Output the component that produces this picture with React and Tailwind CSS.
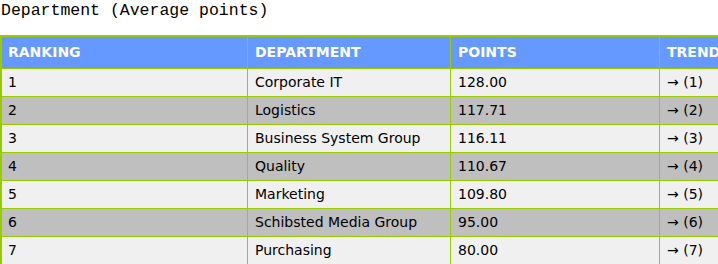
const rows = [
  { rank: 1, dept: 'Corporate IT', points: '128.00' },
  { rank: 2, dept: 'Logistics', points: '117.71' },
  { rank: 3, dept: 'Business System Group', points: '116.11' },
  { rank: 4, dept: 'Quality', points: '110.67' },
  { rank: 5, dept: 'Marketing', points: '109.80' },
  { rank: 6, dept: 'Schibsted Media Group', points: '95.00' },
  { rank: 7, dept: 'Purchasing', points: '80.00' },
];

const cell = 'border-r border-b border-[#99cc00] px-[7px] p-0';

export default function App() {
  return (
    <div className="w-[718px] h-[264px] overflow-hidden bg-white">
      <div className="h-[35px] pt-[1px] pl-[1px] text-[16.5px] leading-[20px] text-black font-['Liberation_Mono',monospace]">
        Department (Average points)
      </div>
      <table className="w-[900px] table-fixed border-separate border-spacing-0 border-t-2 border-l-2 border-[#99cc00] font-['DejaVu_Sans',sans-serif] text-[14px] text-black">
        <colgroup>
          <col className="w-[246px]" />
          <col className="w-[203px]" />
          <col className="w-[209px]" />
          <col />
        </colgroup>
        <thead>
          <tr className="bg-[#6699ff] text-white font-bold text-left">
            <th className={`${cell} h-[32px] pl-[6px]`}>RANKING</th>
            <th className={`${cell} h-[32px]`}>DEPARTMENT</th>
            <th className={`${cell} h-[32px]`}>POINTS</th>
            <th className={`${cell} h-[32px]`}>TREND</th>
          </tr>
        </thead>
        <tbody>
          {rows.map((r, i) => (
            <tr key={r.rank} className={i % 2 ? 'bg-[#bfbfbf]' : 'bg-[#f0f0f0]'}>
              <td className={`${cell} h-[28px] pl-[6px]`}>{r.rank}</td>
              <td className={`${cell} h-[28px]`}>{r.dept}</td>
              <td className={`${cell} h-[28px]`}>{r.points}</td>
              <td className={`${cell} h-[28px]`}>→ ({r.rank})</td>
            </tr>
          ))}
        </tbody>
      </table>
    </div>
  );
}
